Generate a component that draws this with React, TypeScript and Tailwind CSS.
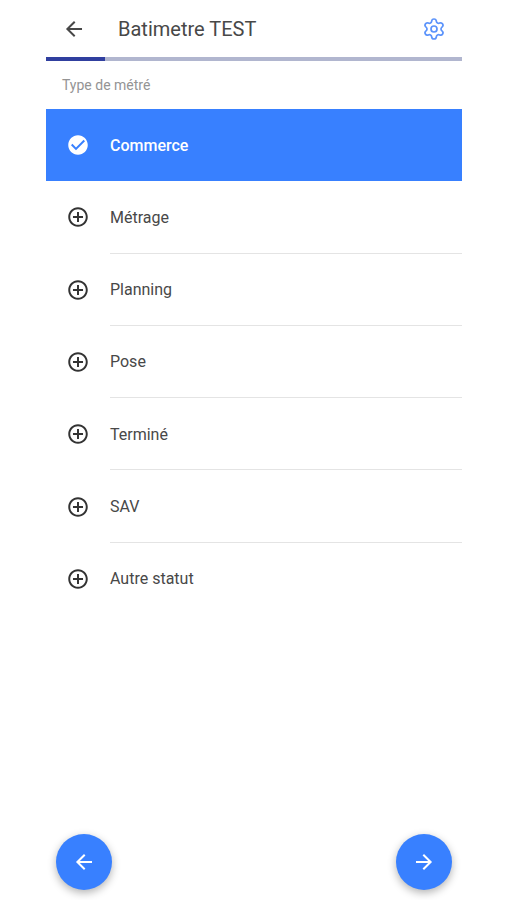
import { useState } from "react";
import { Settings } from "lucide-react";
import {
  IoMdAddCircleOutline,
  IoMdArrowBack,
  IoMdArrowForward,
  IoMdCheckmarkCircle,
} from "react-icons/io";

const statuses = [
  "Commerce",
  "Métrage",
  "Planning",
  "Pose",
  "Terminé",
  "SAV",
  "Autre statut",
];

const STEP = 1;
const STEP_COUNT = 7;

export default function App() {
  const [selected, setSelected] = useState("Commerce");

  return (
    <div className="flex min-h-screen flex-col bg-white pr-[45px] pl-[46px] font-['Roboto',sans-serif] text-[#484848]">
      {/* Toolbar */}
      <header className="flex h-[57px] items-center px-4">
        <button type="button" aria-label="Retour">
          <IoMdArrowBack className="size-6" />
        </button>
        <h1 className="ml-8 flex-1 text-xl">Batimetre TEST</h1>
        <button
          type="button"
          aria-label="Paramètres"
          className="text-[#5b93fb]"
        >
          <Settings className="size-6" strokeWidth={1.7} />
        </button>
      </header>

      {/* Progress */}
      <div
        role="progressbar"
        aria-label="Progression"
        aria-valuenow={STEP}
        aria-valuemin={0}
        aria-valuemax={STEP_COUNT}
        className="h-1 bg-[#b1b6cf]"
      >
        <div
          className="h-full bg-[#303f9f]"
          style={{ width: `${(STEP / STEP_COUNT) * 100}%` }}
        />
      </div>

      <main className="flex-1">
        <h2
          id="status-label"
          className="flex h-12 items-center pl-4 text-sm text-[#949494]"
        >
          Type de métré
        </h2>

        <ul
          role="radiogroup"
          aria-labelledby="status-label"
          className="grid min-h-[506px] auto-rows-fr"
        >
          {statuses.map((status, i) => {
            const active = status === selected;
            const last = i === statuses.length - 1;
            return (
              <li key={status} className="relative">
                <label
                  className={`flex h-full cursor-pointer items-center pl-5 ${
                    active ? "bg-[#3880ff] text-white" : ""
                  }`}
                >
                  <input
                    type="radio"
                    name="status"
                    className="sr-only"
                    checked={active}
                    onChange={() => setSelected(status)}
                  />
                  {active ? (
                    <IoMdCheckmarkCircle className="size-6" />
                  ) : (
                    <IoMdAddCircleOutline className="size-6 text-[#333333]" />
                  )}
                  <span
                    className={`ml-5 flex flex-1 items-center self-stretch border-b pt-0.5 ${
                      active || last
                        ? "border-transparent"
                        : "border-[#e4e4e4]"
                    } ${active ? "font-medium" : ""}`}
                  >
                    {status}
                  </span>
                </label>
              </li>
            );
          })}
        </ul>
      </main>

      {/* Previous / next step */}
      <footer className="flex justify-between p-2.5">
        <button
          type="button"
          aria-label="Étape précédente"
          className="flex size-14 items-center justify-center rounded-full bg-[#3880ff] text-white shadow-[0_3px_8px_rgba(0,0,0,0.3)]"
        >
          <IoMdArrowBack className="size-6" />
        </button>
        <button
          type="button"
          aria-label="Étape suivante"
          className="flex size-14 items-center justify-center rounded-full bg-[#3880ff] text-white shadow-[0_3px_8px_rgba(0,0,0,0.3)]"
        >
          <IoMdArrowForward className="size-6" />
        </button>
      </footer>
    </div>
  );
}
